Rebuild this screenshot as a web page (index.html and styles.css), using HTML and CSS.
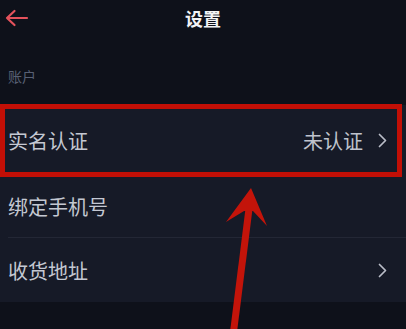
FILE: index.html
```html
<!DOCTYPE html>
<html lang="zh-CN">
<head>
<meta charset="utf-8">
<title>设置</title>
<link rel="stylesheet" href="styles.css">
</head>
<body>
<div class="page">
  <header class="topbar">
    <div class="back">
      <svg width="24" height="18" viewBox="0 0 24 18" aria-hidden="true">
        <path d="M2 9 H22 M9.5 2 L2 9 L9.5 16" fill="none" stroke="#e4525c" stroke-width="2.2" stroke-linecap="round" stroke-linejoin="round"/>
      </svg>
    </div>
    <h1 class="title">设置</h1>
    <div></div>
  </header>

  <div class="section-label">账户</div>

  <ul class="list">
    <li class="row row-first">
      <span class="row-text">实名认证</span>
      <span class="row-right">
        <span class="row-value">未认证</span>
        <svg class="chev" width="9" height="15" viewBox="0 0 9 15" aria-hidden="true"><path d="M1.5 1.5 L7.5 7.5 L1.5 13.5" fill="none" stroke="#b9bdc8" stroke-width="1.7" stroke-linecap="round" stroke-linejoin="round"/></svg>
      </span>
    </li>
    <li class="row row-second">
      <span class="row-text">绑定手机号</span>
    </li>
    <li class="row row-third">
      <span class="row-text">收货地址</span>
      <span class="row-right">
        <svg class="chev" width="9" height="15" viewBox="0 0 9 15" aria-hidden="true"><path d="M1.5 1.5 L7.5 7.5 L1.5 13.5" fill="none" stroke="#b9bdc8" stroke-width="1.7" stroke-linecap="round" stroke-linejoin="round"/></svg>
      </span>
    </li>
  </ul>

  <div class="highlight-box"></div>
  <svg class="annot-arrow" width="406" height="329" viewBox="0 0 406 329" aria-hidden="true">
    <path d="M249 209 L233.5 332" stroke="#c3140a" stroke-width="7" fill="none"/>
    <polygon points="251,188 267,226 253,211 244,211 226,222" fill="#c3140a"/>
  </svg>
</div>
</body>
</html>
```

FILE: styles.css
```css
* { box-sizing: border-box; }
html, body {
  margin: 0;
  padding: 0;
  background: #0e111a;
}
body {
  width: 406px;
  height: 329px;
  overflow: hidden;
  font-family: "Noto Sans CJK SC", "Noto Sans", sans-serif;
}
.page {
  position: relative;
  width: 406px;
  height: 329px;
  background: #0e111a;
}
.topbar {
  height: 36px;
  display: grid;
  grid-template-columns: 1fr auto 1fr;
  align-items: center;
}
.back {
  padding-left: 5px;
  display: flex;
  align-items: center;
}
.title {
  margin: 0;
  font-size: 18px;
  font-weight: 700;
  color: #f2f3f5;
  line-height: 24px;
}
.section-label {
  margin-top: 30px;
  padding-left: 8px;
  font-size: 14px;
  line-height: 20px;
  color: #586074;
}
.list {
  list-style: none;
  margin: 19px 0 0 0;
  padding: 0;
  background: #161a27;
}
.row {
  display: flex;
  align-items: center;
  justify-content: space-between;
  padding: 0 19px 0 8px;
  font-size: 20px;
  color: #c4c8d2;
}
.row-first { height: 70px; }
.row-second {
  height: 63px;
  border-bottom: 1px solid #232735;
  margin-left: 8px;
  padding-left: 0;
}
.row-third { height: 64px; }
.row-right {
  display: flex;
  align-items: center;
  gap: 15px;
}
.row-value { color: #bfc3cd; }
.chev { display: block; }
.highlight-box {
  position: absolute;
  left: 0;
  top: 104px;
  width: 402px;
  height: 73px;
  border: 5px solid #c20f06;
}
.annot-arrow {
  position: absolute;
  left: 0;
  top: 0;
}
```
